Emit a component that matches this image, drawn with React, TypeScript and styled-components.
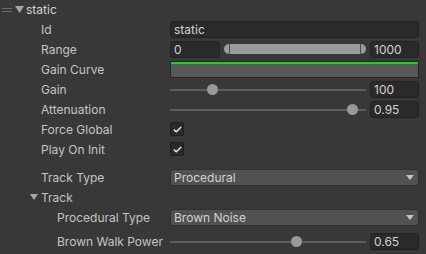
import React from "react";
import styled, { createGlobalStyle } from "styled-components";

const Global = createGlobalStyle`
  html, body { margin: 0; padding: 0; background: #383838; }
  body { font-family: Inter, "Noto Sans", sans-serif; font-size: 12px; color: #c4c4c4; }
`;

const Panel = styled.div`
  width: 426px;
  height: 254px;
  background: #383838;
  display: flex;
  flex-direction: column;
  overflow: hidden;
`;

const Header = styled.div`
  height: 19px;
  display: flex;
  align-items: center;
  padding-left: 2px;
  color: #d2d2d2;
`;

const Handle = styled.div`
  flex: none;
  width: 10px;
  height: 2px;
  border-top: 1px solid #6c6c6c;
  border-bottom: 1px solid #6c6c6c;
  margin-right: 3px;
`;

const Arrow = styled.svg`
  flex: none;
  display: block;
`;

const Tri = ({ w, h, mr }: { w: number; h: number; mr: number }) => (
  <Arrow width={w} height={h} viewBox={`0 0 ${w} ${h}`} style={{ marginRight: mr }}>
    <path d={`M0 0 L${w} 0 L${w / 2} ${h} Z`} fill="#a6a6a6" />
  </Arrow>
);

const Row = styled.div<{ $indent: number; $gapTop?: number }>`
  height: 20px;
  display: flex;
  align-items: center;
  padding-left: ${(p) => p.$indent}px;
  padding-right: 7px;
  margin-top: ${(p) => p.$gapTop ?? 0}px;
`;

const Label = styled.div<{ $indent: number }>`
  width: ${(p) => 170 - p.$indent}px;
  flex: none;
  white-space: nowrap;
  color: #c4c4c4;
  display: flex;
  align-items: center;
`;

const Value = styled.div`
  flex: 1;
  display: flex;
  align-items: center;
  gap: 4px;
  min-width: 0;
`;

const Field = styled.div<{ $w?: number }>`
  height: 17px;
  box-sizing: border-box;
  background: #2a2a2a;
  border: 1px solid #212121;
  border-radius: 3px;
  padding: 0 3px;
  display: flex;
  align-items: center;
  color: #d2d2d2;
  ${(p) => (p.$w ? `width: ${p.$w}px; flex: none;` : "flex: 1;")}
`;

const CurveField = styled.div`
  flex: 1;
  height: 17px;
  box-sizing: border-box;
  background: #575757;
  border: 1px solid #262626;
  border-top: 3px solid #262626;
  position: relative;
  &::before {
    content: "";
    position: absolute;
    left: 0;
    right: 0;
    top: -2px;
    height: 2px;
    background: #1fd11f;
  }
`;

const MinMax = styled.div`
  flex: 1;
  height: 10px;
  background: #9b9b9b;
  border-radius: 5px;
  display: flex;
  padding: 0 5px;
`;

const MinMaxInner = styled.div`
  flex: 1;
  border-left: 1px solid #4a4a4a;
  border-right: 1px solid #4a4a4a;
`;

const SliderTrack = styled.div`
  flex: 1;
  height: 11px;
  position: relative;
  &::before {
    content: "";
    position: absolute;
    left: 0;
    right: 0;
    top: 5px;
    height: 2px;
    background: #5e5e5e;
  }
`;

const Thumb = styled.div`
  position: absolute;
  top: 0;
  width: 11px;
  height: 11px;
  margin-left: -5.5px;
  border-radius: 50%;
  background: #999999;
`;

const Check = styled.div`
  width: 14px;
  height: 14px;
  box-sizing: border-box;
  background: #2a2a2a;
  border: 1px solid #1e1e1e;
  border-radius: 2px;
  display: flex;
  align-items: center;
  justify-content: center;
`;

const Dropdown = styled.div`
  flex: 1;
  height: 17px;
  box-sizing: border-box;
  background: #515151;
  border: 1px solid #303030;
  border-radius: 3px;
  padding: 0 4px 0 3px;
  display: flex;
  align-items: center;
  justify-content: space-between;
  color: #d2d2d2;
`;

const DropArrow = styled.span`
  width: 0;
  height: 0;
  border-left: 4px solid transparent;
  border-right: 4px solid transparent;
  border-top: 5px solid #c4c4c4;
`;

const CheckMark = () => (
  <svg width="9" height="7" viewBox="0 0 9 7">
    <path d="M0.8 3.6 L3.3 5.8 L8.2 1" fill="none" stroke="#e6e6e6" strokeWidth="1.5" />
  </svg>
);

const Slider = ({ pct, value }: { pct: number; value: string }) => (
  <Value>
    <SliderTrack>
      <Thumb style={{ left: `${pct}%` }} />
    </SliderTrack>
    <Field $w={49}>{value}</Field>
  </Value>
);

export default function App() {
  return (
    <>
      <Global />
      <Panel>
        <Header>
          <Handle />
          <Tri w={9} h={7} mr={2} />
          <span>static</span>
        </Header>
        <Row $indent={41}>
          <Label $indent={41}>Id</Label>
          <Value>
            <Field>static</Field>
          </Value>
        </Row>
        <Row $indent={41}>
          <Label $indent={41}>Range</Label>
          <Value>
            <Field $w={50}>0</Field>
            <MinMax>
              <MinMaxInner />
            </MinMax>
            <Field $w={49}>1000</Field>
          </Value>
        </Row>
        <Row $indent={41}>
          <Label $indent={41}>Gain Curve</Label>
          <Value>
            <CurveField />
          </Value>
        </Row>
        <Row $indent={41}>
          <Label $indent={41}>Gain</Label>
          <Slider pct={21.5} value="100" />
        </Row>
        <Row $indent={41}>
          <Label $indent={41}>Attenuation</Label>
          <Slider pct={93} value="0.95" />
        </Row>
        <Row $indent={41}>
          <Label $indent={41}>Force Global</Label>
          <Value>
            <Check>
              <CheckMark />
            </Check>
          </Value>
        </Row>
        <Row $indent={41}>
          <Label $indent={41}>Play On Init</Label>
          <Value>
            <Check>
              <CheckMark />
            </Check>
          </Value>
        </Row>
        <Row $indent={41} $gapTop={8}>
          <Label $indent={41}>Track Type</Label>
          <Value>
            <Dropdown>
              <span>Procedural</span>
              <DropArrow />
            </Dropdown>
          </Value>
        </Row>
        <Row $indent={30}>
          <Label $indent={30}>
            <Tri w={8} h={6} mr={3} />
            <span>Track</span>
          </Label>
        </Row>
        <Row $indent={57}>
          <Label $indent={57}>Procedural Type</Label>
          <Value>
            <Dropdown>
              <span>Brown Noise</span>
              <DropArrow />
            </Dropdown>
          </Value>
        </Row>
        <Row $indent={57} $gapTop={4}>
          <Label $indent={57}>Brown Walk Power</Label>
          <Slider pct={64.5} value="0.65" />
        </Row>
      </Panel>
    </>
  );
}
